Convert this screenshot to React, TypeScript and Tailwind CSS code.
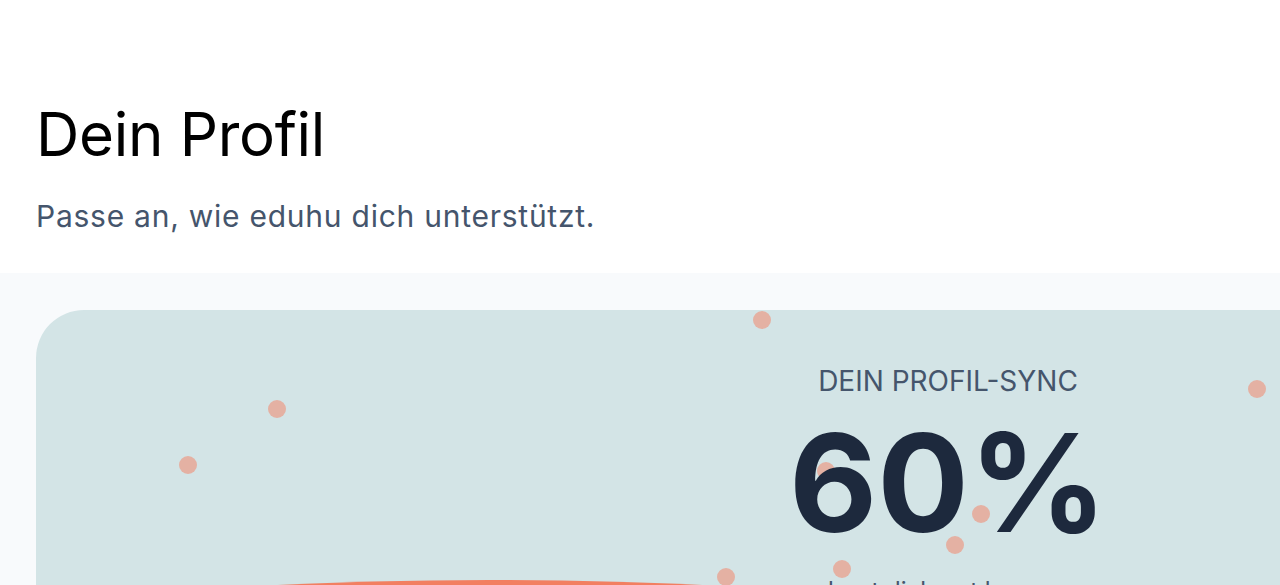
import React from "react";

const dots = [
  { x: 726, y: 10 },
  { x: 1221, y: 79 },
  { x: 790, y: 161 },
  { x: 945, y: 204 },
  { x: 919, y: 235 },
  { x: 806, y: 259 },
  { x: 690, y: 267 },
  { x: 241, y: 99 },
  { x: 152, y: 155 },
];

export default function App() {
  return (
    <main className="min-h-screen overflow-x-hidden bg-white font-['Inter',sans-serif]">
      {/* Header */}
      <header className="px-9 pt-[104px] pb-[39px] bg-white">
        <h1 className="text-6xl leading-none tracking-[-0.005em] text-black font-normal">Dein Profil</h1>
        <p className="mt-[34px] text-3xl leading-9 tracking-wide text-slate-600">Passe an, wie eduhu dich unterstützt.</p>
      </header>

      {/* Sync section */}
      <section className="bg-[#f8fafc] pl-9 pt-[37px] pb-12">
        <div className="relative w-[1300px] rounded-tl-[48px] bg-[#d3e4e6] overflow-hidden">
          {dots.map((d, i) => (
            <span
              key={i}
              className="absolute h-[18px] w-[18px] rounded-full bg-[#e4b1a3]"
              style={{ left: d.x - 9, top: d.y - 9 }}
            />
          ))}

          <svg className="absolute left-[200px] top-[268px]" width="520" height="40" viewBox="0 0 520 40">
            <path d="M18 8 Q253 -4 488 8 L488 40 L18 40 Z" fill="#f27f61" />
          </svg>

          <div className="relative z-10 grid grid-cols-[620px_584px] pb-24">
            <div />
            <div className="flex flex-col items-center pt-[53px] text-center">
              <p className="text-[28px] leading-9 text-slate-600">DEIN PROFIL-SYNC</p>
              <p className="mt-4 text-[136px] font-bold leading-none text-slate-800">60%</p>
              <p className="mt-[24px] text-2xl leading-8 text-slate-600">lernt dich gut kennen</p>
            </div>
          </div>
        </div>
      </section>
    </main>
  );
}
